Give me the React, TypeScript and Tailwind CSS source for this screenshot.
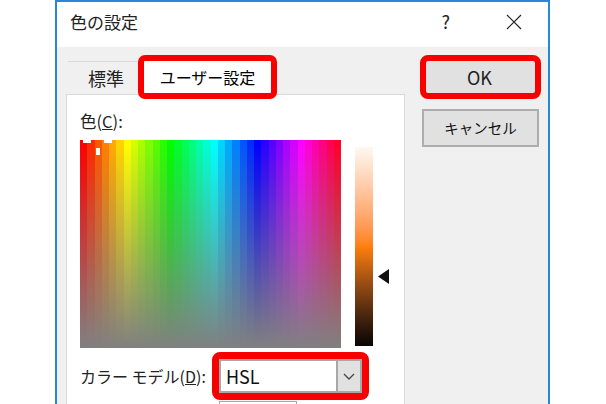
const font = { fontFamily: '"Noto Sans CJK JP", "Liberation Sans", sans-serif' }

const bands = Array.from({ length: 36 }, (_, i) => i)

function Spectrum() {
  return (
    <svg width="261" height="208" className="block shrink-0" shapeRendering="crispEdges">
      <defs>
        <linearGradient id="grey" x1="0" x2="0" y1="0" y2="1">
          <stop offset="0" stopColor="#808080" stopOpacity="0" />
          <stop offset="1" stopColor="#808080" stopOpacity="1" />
        </linearGradient>
      </defs>
      {bands.map((i) => (
        <rect key={i} x={i * 7.25} y="0" width="7.5" height="208" fill={`hsl(${i * 10}, 100%, 50%)`} />
      ))}
      <rect width="261" height="208" fill="url(#grey)" />
      <rect x="3" y="0" width="8" height="3" fill="#fff" />
      <rect x="24" y="0" width="8" height="3" fill="#fff" />
      <rect x="16" y="8" width="4" height="7" fill="#fff" />
    </svg>
  )
}

export default function App() {
  return (
    <div className="w-[606px] h-[404px] bg-white overflow-hidden" style={font}>
      <div className="ml-[55px] w-[495px] h-[404px] border-x-2 border-t-2 border-[#2b86d8] flex flex-col text-[#222] overflow-hidden">
        <div className="h-[45px] shrink-0 bg-white flex items-center pl-[13px] pb-[6px] text-[17px]">
          <span className="flex-1">色の設定</span>
          <span className="text-[18px] mr-[56px]">?</span>
          <svg width="16" height="16" viewBox="0 0 16 16" className="mr-[26px]">
            <path d="M1 1 L15 15 M15 1 L1 15" stroke="#222" strokeWidth="1.2" fill="none" />
          </svg>
        </div>

        <div className="flex-1 min-h-0 bg-[#f0f0f0] flex pl-[9px]">
          <div className="w-[339px] shrink-0 pt-[8px]">
            <div className="relative z-10 h-[44px] flex items-start">
              <div className="ml-[2px] mt-[6px] w-[70px] h-[33px] border-t border-[#d9d9d9] flex items-center justify-center text-[18px] pl-[6px]">
                標準
              </div>
              <div className="w-[139px] h-[44px] flex items-center justify-center bg-white border-[6px] border-[#f80000] rounded-[7px] text-[16px] text-black">
                ユーザー設定
              </div>
            </div>
            <div className="-mt-[5px] h-[320px] bg-white border border-[#d9d9d9] pl-[13px] pt-[14px]">
              <div className="text-[16.5px] leading-[24px]">
                色(<span className="underline">C</span>):
              </div>
              <div className="flex mt-[7px]">
                <Spectrum />
                <div className="ml-[14px] w-[18px] h-[199px] mt-[7px] bg-gradient-to-b from-[#fff8f2] via-[#ff7f0a] to-[#0a0604]" />
                <svg width="11" height="15" className="ml-[5px] mt-[129px]">
                  <path d="M11 0 V15 L0 7.5 Z" fill="#111" />
                </svg>
              </div>
              <div className="flex items-center mt-[4px]">
                <span className="text-[16px] w-[132px] whitespace-nowrap">
                  カラー モデル(<span className="underline">D</span>):
                </span>
                <div className="w-[157px] h-[48px] border-[7px] border-[#f80000] rounded-[8px] flex bg-white">
                  <div className="flex-1 flex items-center pl-[5px] text-[18px] border-2 border-[#a8a8a8] border-r-0 text-[#111]">HSL</div>
                  <div className="w-[26px] bg-[#e1e1e1] border-2 border-[#a8a8a8] flex items-center justify-center">
                    <svg width="12" height="7" viewBox="0 0 12 7">
                      <path d="M1 1 L6 6 L11 1" stroke="#444" strokeWidth="1.3" fill="none" />
                    </svg>
                  </div>
                </div>
              </div>
              <div className="flex mt-[1px]">
                <span className="text-[16px] w-[139px] leading-[24px]">色合い(<span className="underline">E</span>):</span>
                <div className="w-[78px] h-[30px] bg-white border border-[#a8a8a8]" />
              </div>
            </div>
          </div>

          <div className="ml-[15px] pt-[8px] w-[121px] shrink-0">
            <div className="h-[44px] border-[6px] border-[#f80000] rounded-[8px] bg-[#e1e1e1] flex items-center justify-center text-[18px] pr-[2px]">
              OK
            </div>
            <div className="ml-[2px] mt-[10px] w-[117px] h-[38px] border-2 border-[#adadad] bg-[#e1e1e1] flex items-center justify-center text-[14.5px] text-[#111]">
              キャンセル
            </div>
          </div>
        </div>
      </div>
    </div>
  )
}
